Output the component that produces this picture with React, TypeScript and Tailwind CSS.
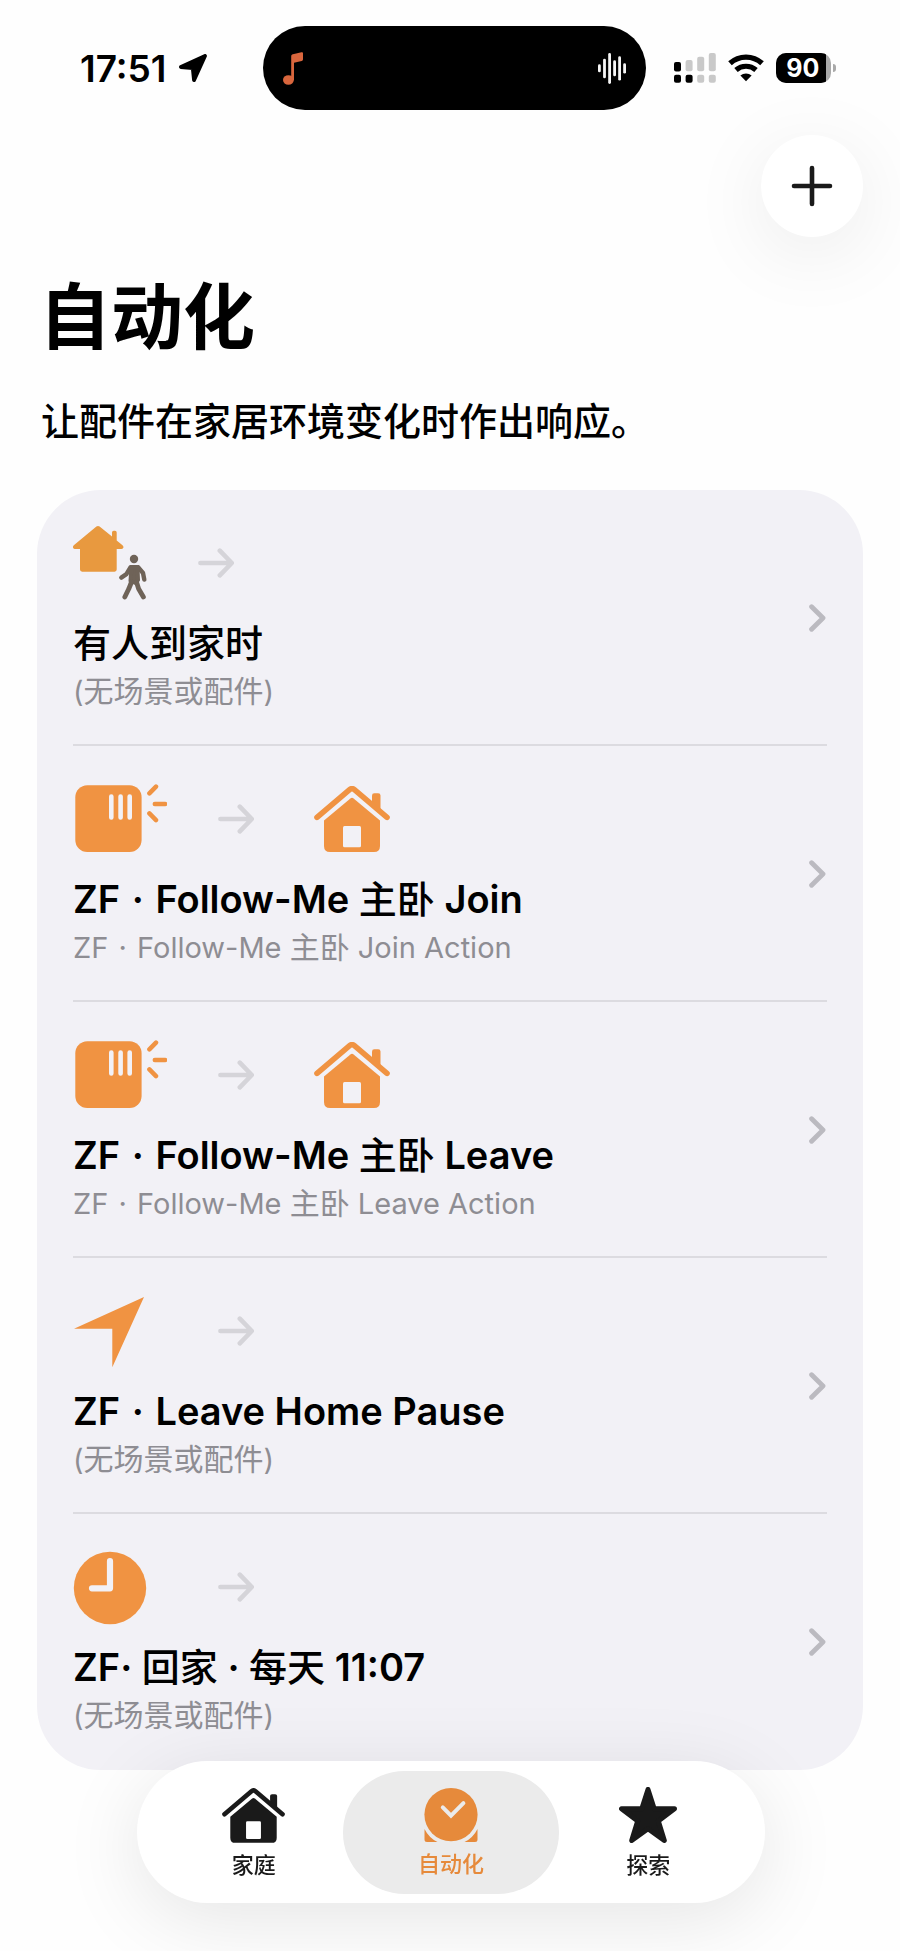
import React, { useState } from "react";

const ORANGE = "#f09342";

function LocationIcon() {
  return (
    <svg width="28" height="28" viewBox="0 0 28 28" aria-hidden="true">
      <path d="M1.900 13 26 1.900 15 26.100 13.800 14.200Z" fill="#000" stroke="#000" strokeWidth="3.800" strokeLinejoin="round" />
    </svg>
  );
}

function MusicNoteIcon() {
  return (
    <svg width="20" height="33" viewBox="0 0 20 33" aria-hidden="true">
      <g fill="#d9663d">
        <ellipse cx="5.4" cy="28" rx="5.4" ry="4.800" />
        <path d="M8.2 4.4c0-1.2.6-1.9 1.7-2.1L18.4.2c1-.2 1.6.2 1.6 1.1v6c0 .9-.4 1.4-1.3 1.6L11 10.800V28.200H8.200Z" />
      </g>
    </svg>
  );
}

function WaveformIcon() {
  const bars = [
    [0, 11.3, 8],
    [5.1, 5.7, 19.6],
    [10.2, 0, 31],
    [15.2, 7.3, 16],
    [20.2, 3.3, 24.3],
    [25.2, 10.3, 10.3],
  ];
  return (
    <svg width="28" height="31" viewBox="0 0 28 31" aria-hidden="true">
      {bars.map(([x, y, h]) => (
        <rect key={x} x={x} y={y} width="2.8" height={h} rx="1.4" fill="#f5f5f5" />
      ))}
    </svg>
  );
}

function SignalIcon() {
  const tops = [9, 7, 3.7, 0];
  const heights = [9.4, 11.3, 14.6, 18.3];
  return (
    <svg width="42" height="30" viewBox="0 0 42 30" aria-hidden="true">
      {tops.map((top, i) => (
        <g key={i}>
          <rect x={i * 11.6} y={top} width="7" height={heights[i]} rx="2" fill={i < 1 ? "#000" : "#c9c9c9"} />
          <rect x={i * 11.6} y="21.8" width="7" height="8" rx="2" fill={i < 2 ? "#000" : "#c9c9c9"} />
        </g>
      ))}
    </svg>
  );
}

function WifiIcon() {
  return (
    <svg width="36" height="28" viewBox="0 0 36 28" aria-hidden="true">
      <path d="M2 9.300a23.600 23.600 0 0 1 32 0" fill="none" stroke="#000" strokeWidth="5.300" />
      <path d="M8 16a15.200 15.200 0 0 1 20 0" fill="none" stroke="#000" strokeWidth="5.200" />
      <path d="M12.400 21.600a8.400 8.400 0 0 1 11.200 0L18 27.300Z" fill="#000" />
    </svg>
  );
}

function Battery({ level }: { level: number }) {
  return (
    <div className="flex items-center gap-0.5">
      <div className="flex h-[30px] w-[55px] items-center overflow-hidden rounded-[10px] bg-[#a9a9a9]">
        <div className="flex h-full items-center justify-center bg-black pl-1 text-[25px] leading-none font-bold text-white" style={{ width: `${level}%` }}>
          {level}
        </div>
      </div>
      <div className="h-2 w-[3px] rounded-r-full bg-[#a9a9a9]" />
    </div>
  );
}

function HouseIcon({ color, hole, className }: { color: string; hole: string; className: string }) {
  return (
    <svg viewBox="0 0 76 66" className={className} aria-hidden="true">
      <path d="M58 19V9.600Q58 7.300 60.300 7.300H64.200Q66.500 7.300 66.500 9.600V27Z" fill={color} />
      <path d="M3 31.400 35.600 3.700Q38 1.700 40.400 3.700L73 31.400" fill="none" stroke={color} strokeWidth="5.6" strokeLinecap="round" strokeLinejoin="round" />
      <path d="M10 34.500 36.400 12.400Q38 11.200 39.600 12.400L66 34.500V60Q66 66 60 66H16Q10 66 10 60Z" fill={color} />
      <rect x="29" y="40" width="18" height="21.200" rx="1.500" fill={hole} />
    </svg>
  );
}

function ArriveIcon() {
  return (
    <svg width="74" height="74" viewBox="0 0 74 74" aria-hidden="true">
      <path
        d="M23.400.6Q25 -.6 26.600.6L39 10.600V6.400Q39 4.700 40.700 4.700H42Q43.700 4.700 43.700 6.400V14.400L49.500 19.200Q51 20.600 50.200 22Q49.700 23 48.300 23H43.700V43.600Q43.700 45.700 41.600 45.700H9.100Q7 45.700 7 43.600V23H2Q.5 23 .1 21.800Q-.4 20.400 .8 19.200Z"
        fill="#e8993f"
      />
      <g fill="none" stroke="#6f6358" strokeLinecap="round" strokeLinejoin="round">
        <circle cx="61" cy="33" r="4.200" fill="#6f6358" stroke="none" />
        <path d="M48.300 51.600 53.400 48.200 57.600 41.200" strokeWidth="4.400" />
        <path d="M65.300 41.300 70 47 71.300 53.600" strokeWidth="4.400" />
        <path d="M58.500 41H64.500L65 54 62.500 57 57.500 55Z" fill="#6f6358" strokeWidth="4" />
        <path d="M58.500 56 55.800 62.800 51.800 71M63.500 56 65.600 62.800 70.400 71" strokeWidth="4.800" />
      </g>
    </svg>
  );
}

function SensorIcon() {
  return (
    <svg width="94" height="74" viewBox="0 0 94 74" aria-hidden="true">
      <rect x="2.300" y="3.300" width="66.300" height="66.700" rx="12" fill={ORANGE} />
      <path d="M38.300 14.500V35.500M47.600 14.500V35.500M56.700 14.500V35.500" stroke="#f2f1f6" strokeWidth="4.600" strokeLinecap="round" />
      <path d="M76.400 11.300 83 4.600M81.800 22H92.200M76.400 31.400 83 38.100" stroke={ORANGE} strokeWidth="4.500" strokeLinecap="round" />
    </svg>
  );
}

function LeaveIcon() {
  return (
    <svg width="94" height="74" viewBox="0 0 94 74" aria-hidden="true">
      <path d="M71 3 1 34.700H39.300V73.300Z" fill={ORANGE} />
    </svg>
  );
}

function ClockIcon() {
  return (
    <svg width="94" height="74" viewBox="0 0 94 74" className="overflow-visible" aria-hidden="true">
      <circle cx="37" cy="38" r="36.200" fill={ORANGE} />
      <path d="M37 11.200V38.300H19" fill="none" stroke="#f2f1f6" strokeWidth="6.200" strokeLinecap="round" strokeLinejoin="round" />
    </svg>
  );
}

function ArrowIcon() {
  return (
    <svg width="36" height="30" viewBox="0 0 36 30" aria-hidden="true">
      <path d="M2.400 15H33M21.800 2.700 33.800 15 21.800 27.300" fill="none" stroke="#d5d4d9" strokeWidth="4.600" strokeLinecap="round" strokeLinejoin="round" />
    </svg>
  );
}

function ChevronIcon() {
  return (
    <svg width="18" height="28" viewBox="0 0 18 28" className="shrink-0" aria-hidden="true">
      <path d="M2.600 2.700 14 14 2.600 25.300" fill="none" stroke="#bbbac0" strokeWidth="4.800" strokeLinecap="round" strokeLinejoin="round" />
    </svg>
  );
}

function AutomationIcon() {
  return (
    <svg width="54" height="54" viewBox="0 0 54 54" aria-hidden="true">
      <path d="M.5 41Q5 50 13.500 54H3Q.5 54 .5 51.500ZM53.500 41Q49 50 40.500 54H51Q53.500 54 53.500 51.500Z" fill="#e68a3b" />
      <circle cx="27" cy="26.600" r="26.600" fill="#e68a3b" />
      <path d="M18.800 19.400 27 27.600 39.400 15.200" fill="none" stroke="#ebebeb" strokeWidth="4" strokeLinecap="round" strokeLinejoin="miter" />
    </svg>
  );
}

function StarIcon() {
  return (
    <svg width="58" height="56" viewBox="0 0 58 56" aria-hidden="true">
      <path d="M29 2.500 35.200 21.800H55.500L39.300 34 45.300 53.500 29 41.800 12.700 53.500 18.700 34 2.500 21.800H22.800Z" fill="#1a1a1a" stroke="#1a1a1a" strokeWidth="5" strokeLinejoin="round" />
    </svg>
  );
}

// Chinese runs get their own weight/size next to the Latin ones
function MixedText({ text, cjkClass }: { text: string; cjkClass: string }) {
  return (
    <>
      {text.split(/([\u4e00-\u9fff]+| · (?=[A-Z]))/).map((part, i, parts) => {
        if (part === " · " && /^[A-Z]/.test(parts[i + 1])) return <span key={i} className="mx-0.5">{part}</span>;
        if (/[\u4e00-\u9fff]/.test(part)) return <span key={i} className={cjkClass}>{part}</span>;
        return part;
      })}
    </>
  );
}

const automations = [
  { id: 1, icon: <ArriveIcon />, scene: false, title: "有人到家时", detail: "(无场景或配件)" },
  { id: 2, icon: <SensorIcon />, scene: true, title: "ZF · Follow-Me 主卧 Join", detail: "ZF · Follow-Me 主卧 Join Action" },
  { id: 3, icon: <SensorIcon />, scene: true, title: "ZF · Follow-Me 主卧 Leave", detail: "ZF · Follow-Me 主卧 Leave Action" },
  { id: 4, icon: <LeaveIcon />, scene: false, title: "ZF · Leave Home Pause", detail: "(无场景或配件)" },
  { id: 5, icon: <ClockIcon />, scene: false, title: "ZF· 回家 · 每天 11:07", detail: "(无场景或配件)" },
];

const tabs = [
  { id: "home", label: "家庭", icon: <HouseIcon color="#1a1a1a" hole="#ffffff" className="h-[55px] w-[63px]" /> },
  { id: "automation", label: "自动化", icon: <AutomationIcon /> },
  { id: "discover", label: "探索", icon: <StarIcon /> },
];

export default function App() {
  const [activeTab, setActiveTab] = useState("automation");

  return (
    <div className="min-h-screen bg-[#fefefe] pt-[26px] font-['Inter','Noto_Sans_CJK_SC',sans-serif] text-black">
      <header className="flex h-[84px] items-center pr-16 pl-20">
        <div className="flex w-[183px] shrink-0 items-center justify-between pr-14">
          <span className="text-[37px] leading-none font-semibold">17:51</span>
          <LocationIcon />
        </div>
        <div className="flex h-full flex-1 items-center justify-between rounded-full bg-black px-5">
          <MusicNoteIcon />
          <WaveformIcon />
        </div>
        <div className="ml-7 flex shrink-0 items-center gap-3">
          <SignalIcon />
          <WifiIcon />
          <Battery level={90} />
        </div>
      </header>

      <main className="px-[37px] pb-44">
        <div className="mt-[25px] flex justify-end">
          <button aria-label="添加" className="flex size-[102px] items-center justify-center rounded-full bg-white shadow-[0_16px_80px_rgba(0,0,0,0.08)]">
            <svg width="42" height="42" viewBox="0 0 42 42" aria-hidden="true">
              <path d="M21 3V39M3 21H39" stroke="#1a1a1a" strokeWidth="4.600" strokeLinecap="round" />
            </svg>
          </button>
        </div>

        <h1 className="mt-[38px] pl-0.5 text-[72px] leading-[84px] font-bold">自动化</h1>
        <p className="mt-[38px] pl-1 text-[38px] leading-[48px] font-medium">让配件在家居环境变化时作出响应。</p>

        <ul className="mt-[45px] rounded-[64px] bg-[#f2f1f6] px-9">
          {automations.map((item) => (
            <li key={item.id} className="border-b-2 border-[#dcdbe0] last:border-transparent">
              <button className="flex w-full items-center justify-between pt-9 pb-[34px] text-left">
                <div>
                  <div className="flex h-[74px] items-center">
                    {item.icon}
                    <span className="mr-[60px] ml-[51px]">
                      <ArrowIcon />
                    </span>
                    {item.scene && <HouseIcon color={ORANGE} hole="#f2f1f6" className="h-[66px] w-[76px]" />}
                  </div>
                  <div className="mt-5 text-[38px] leading-[46px] font-semibold">
                    <MixedText text={item.title} cjkClass="font-medium" />
                  </div>
                  <div className="mt-2 text-[29px] leading-9 text-[#8e8d93]">
                    <MixedText text={item.detail} cjkClass="text-[30px] leading-none" />
                  </div>
                </div>
                <ChevronIcon />
              </button>
            </li>
          ))}
        </ul>
      </main>

      <div className="fixed inset-x-0 bottom-12 flex justify-center pl-0.5">
        <nav className="grid h-[142px] w-[70%] max-w-[628px] grid-cols-3 items-center rounded-full bg-white px-[18px] shadow-[0_16px_80px_rgba(0,0,0,0.1)]">
          {tabs.map((tab) => (
            <button
              key={tab.id}
              onClick={() => setActiveTab(tab.id)}
              className={`-mx-[9px] flex h-[123px] flex-col items-center justify-center gap-2 rounded-full pt-0.5 ${
                activeTab === tab.id ? "bg-[#ebebeb] text-[#e68a3b]" : "text-[#1a1a1a]"
              }`}
            >
              {tab.icon}
              <span className="text-[22px] leading-7 font-medium">{tab.label}</span>
            </button>
          ))}
        </nav>
      </div>
    </div>
  );
}
